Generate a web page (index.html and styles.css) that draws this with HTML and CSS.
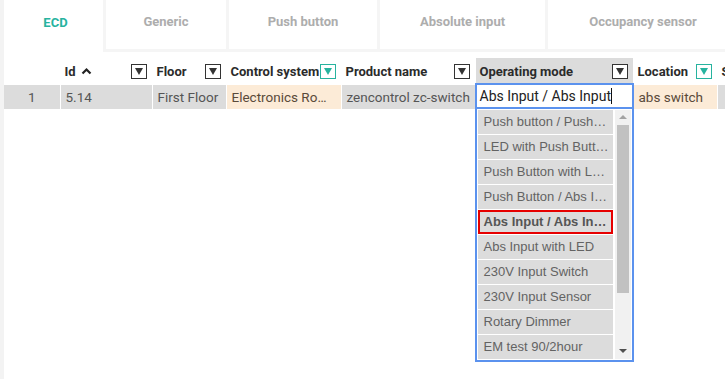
FILE: index.html
```html
<!DOCTYPE html>
<html lang="en">
<head>
    <meta charset="UTF-8">
    <meta name="viewport" content="width=device-width, initial-scale=1.0">
    <title>Devices</title>
    <link rel="stylesheet" href="styles.css">
</head>
<body>

<div class="app">
    <div class="tabs">
        <div class="tab active">ECD</div>
        <div class="tab tab-generic">Generic</div>
        <div class="tab tab-push">Push button</div>
        <div class="tab tab-abs">Absolute input</div>
        <div class="tab tab-occ">Occupancy sensor</div>
    </div>

    <table class="grid">
        <colgroup>
            <col class="c-num">
            <col class="c-id">
            <col class="c-floor">
            <col class="c-control">
            <col class="c-product">
            <col class="c-mode">
            <col class="c-location">
            <col class="c-next">
        </colgroup>
        <thead>
            <tr>
                <th></th>
                <th><div class="head"><span>Id <svg class="sort" width="11" height="8" viewBox="0 0 11 8"><polyline points="1.5,6.5 5.5,2.5 9.5,6.5" fill="none" stroke="#222" stroke-width="2.2"/></svg></span><span class="filter"></span></div></th>
                <th><div class="head"><span>Floor</span><span class="filter"></span></div></th>
                <th><div class="head"><span>Control system</span><span class="filter on"></span></div></th>
                <th><div class="head"><span>Product name</span><span class="filter"></span></div></th>
                <th class="sel"><div class="head"><span>Operating mode</span><span class="filter"></span></div></th>
                <th><div class="head"><span>Location</span><span class="filter on"></span></div></th>
                <th><div class="head"><span>Switch</span></div></th>
            </tr>
        </thead>
        <tbody>
            <tr>
                <td class="num">1</td>
                <td>5.14</td>
                <td>First Floor</td>
                <td class="changed">Electronics Room</td>
                <td>zencontrol zc-switch</td>
                <td class="editing">
                    <div class="editor">Abs Input / Abs Input<span class="caret"></span></div>
                    <div class="dropdown">
                        <ul class="options">
                            <li>Push button / Push button</li>
                            <li>LED with Push Button</li>
                            <li>Push Button with LED</li>
                            <li>Push Button / Abs Input</li>
                            <li class="picked">Abs Input / Abs Input</li>
                            <li>Abs Input with LED</li>
                            <li>230V Input Switch</li>
                            <li>230V Input Sensor</li>
                            <li>Rotary Dimmer</li>
                            <li>EM test 90/2hour</li>
                            <li>EM test 180/3hour</li>
                        </ul>
                        <div class="scrollbar">
                            <span class="arrow up"></span>
                            <span class="thumb"></span>
                            <span class="arrow down"></span>
                        </div>
                    </div>
                </td>
                <td class="changed">abs switch</td>
                <td></td>
            </tr>
        </tbody>
    </table>
</div>

</body>
</html>
```

FILE: styles.css
```css
:root {
    --teal: #27b39f;
    --cell-bg: #dcdcdc;
    --changed-bg: #fcebd7;
    --blue: #5b92ee;
    --text-color: #555;
}

body {
    margin: 0;
    background-color: #f3f3f3;
    font-family: Roboto, 'Liberation Sans', sans-serif;
    overflow: hidden;
    height: 379px;
}

.app {
    margin-left: 4px;
    background-color: #ffffff;
    height: 379px;
}

/* tabs */
.tabs {
    display: flex;
    gap: 3px;
    height: 52px;
    background-color: #f5f5f5;
    align-items: flex-start;
    overflow: hidden;
}

.tab {
    flex: none;
    height: 49px;
    box-sizing: border-box;
    padding-top: 14px;
    line-height: 16px;
    background-color: #ffffff;
    color: #adadad;
    font-size: 13px;
    font-weight: bold;
    text-align: center;
}

.tab.active {
    width: 99px;
    height: 52px;
    padding-top: 15px;
    padding-left: 4px;
    color: var(--teal);
}

.tab-generic { width: 120px; }
.tab-push { width: 148px; }
.tab-abs { width: 165px; }
.tab-occ { width: 190px; }

/* grid */
.grid {
    table-layout: fixed;
    border-collapse: collapse;
    margin-top: 6px;
    width: 773px;
}

.c-num { width: 56px; }
.c-id { width: 92px; }
.c-floor { width: 74px; }
.c-control { width: 115px; }
.c-product { width: 134px; }
.c-mode { width: 158px; }
.c-location { width: 84px; }
.c-next { width: 60px; }

th {
    height: 26px;
    padding: 0;
    text-align: left;
    font-size: 13px;
    color: #2b2b2b;
    border-right: 1px solid #ffffff;
    border-bottom: 1px solid #ffffff;
}

th.sel {
    background-color: var(--cell-bg);
}

.head {
    display: flex;
    align-items: center;
    justify-content: space-between;
    padding: 0 5px 0 4px;
    white-space: nowrap;
}

.sort {
    margin-left: 2px;
    vertical-align: 1px;
}

.filter {
    position: relative;
    flex: none;
    width: 14px;
    height: 13px;
    border: 1px solid #333;
    background-color: #ffffff;
}

.filter::after {
    content: '';
    position: absolute;
    left: 3px;
    top: 3px;
    border-left: 4px solid transparent;
    border-right: 4px solid transparent;
    border-top: 7px solid #333;
}

.filter.on {
    border-color: var(--teal);
}

.filter.on::after {
    border-top-color: var(--teal);
}

td {
    height: 24px;
    padding: 0 4px 0 5px;
    background-color: var(--cell-bg);
    color: var(--text-color);
    font-size: 13.5px;
    border-right: 1px solid #ffffff;
    white-space: nowrap;
    overflow: hidden;
    text-overflow: ellipsis;
}

td.num {
    text-align: center;
    padding: 0;
}

td.changed {
    background-color: var(--changed-bg);
    color: #5a4a3a;
    padding-right: 8px;
}

td.editing {
    position: relative;
    overflow: visible;
    background-color: #ffffff;
}

.editor {
    position: absolute;
    left: -1px;
    top: -2px;
    width: 159px;
    height: 26px;
    box-sizing: border-box;
    border: 2px solid var(--blue);
    background-color: #ffffff;
    padding: 0 3px;
    line-height: 22px;
    font-size: 14px;
    color: #222;
}

.caret {
    display: inline-block;
    width: 1px;
    height: 16px;
    background-color: #111;
    vertical-align: -3px;
}

.dropdown {
    position: absolute;
    left: -1px;
    top: 24px;
    width: 159px;
    height: 253px;
    box-sizing: border-box;
    border: 2px solid var(--blue);
    border-top: 0;
    background-color: #ffffff;
    display: flex;
    gap: 2px;
    padding: 1px 1px 0 1px;
    overflow: hidden;
    z-index: 2;
}

.options {
    list-style: none;
    margin: 0;
    padding: 0;
    width: 135px;
    flex: none;
}

.options li {
    height: 24px;
    box-sizing: border-box;
    margin-bottom: 1px;
    padding: 0 3px 0 6px;
    line-height: 24px;
    background-color: var(--cell-bg);
    color: #636363;
    font-family: 'Liberation Sans', Arial, sans-serif;
    font-size: 13px;
    white-space: nowrap;
    overflow: hidden;
    text-overflow: ellipsis;
}

.options li.picked {
    border: 2px solid #e60000;
    line-height: 20px;
    padding: 0 2px 0 4px;
    font-weight: bold;
    color: #555;
}

.scrollbar {
    position: relative;
    width: 16px;
    flex: none;
    background-color: #f1f1f1;
    margin-bottom: 1px;
}

.thumb {
    position: absolute;
    left: 2px;
    right: 2px;
    top: 15px;
    height: 168px;
    background-color: #c1c1c1;
}

.arrow {
    position: absolute;
    left: 4px;
    border-left: 4px solid transparent;
    border-right: 4px solid transparent;
}

.arrow.up {
    top: 5px;
    border-bottom: 4px solid #a3a3a3;
}

.arrow.down {
    bottom: 6px;
    border-top: 4px solid #505050;
}
```
